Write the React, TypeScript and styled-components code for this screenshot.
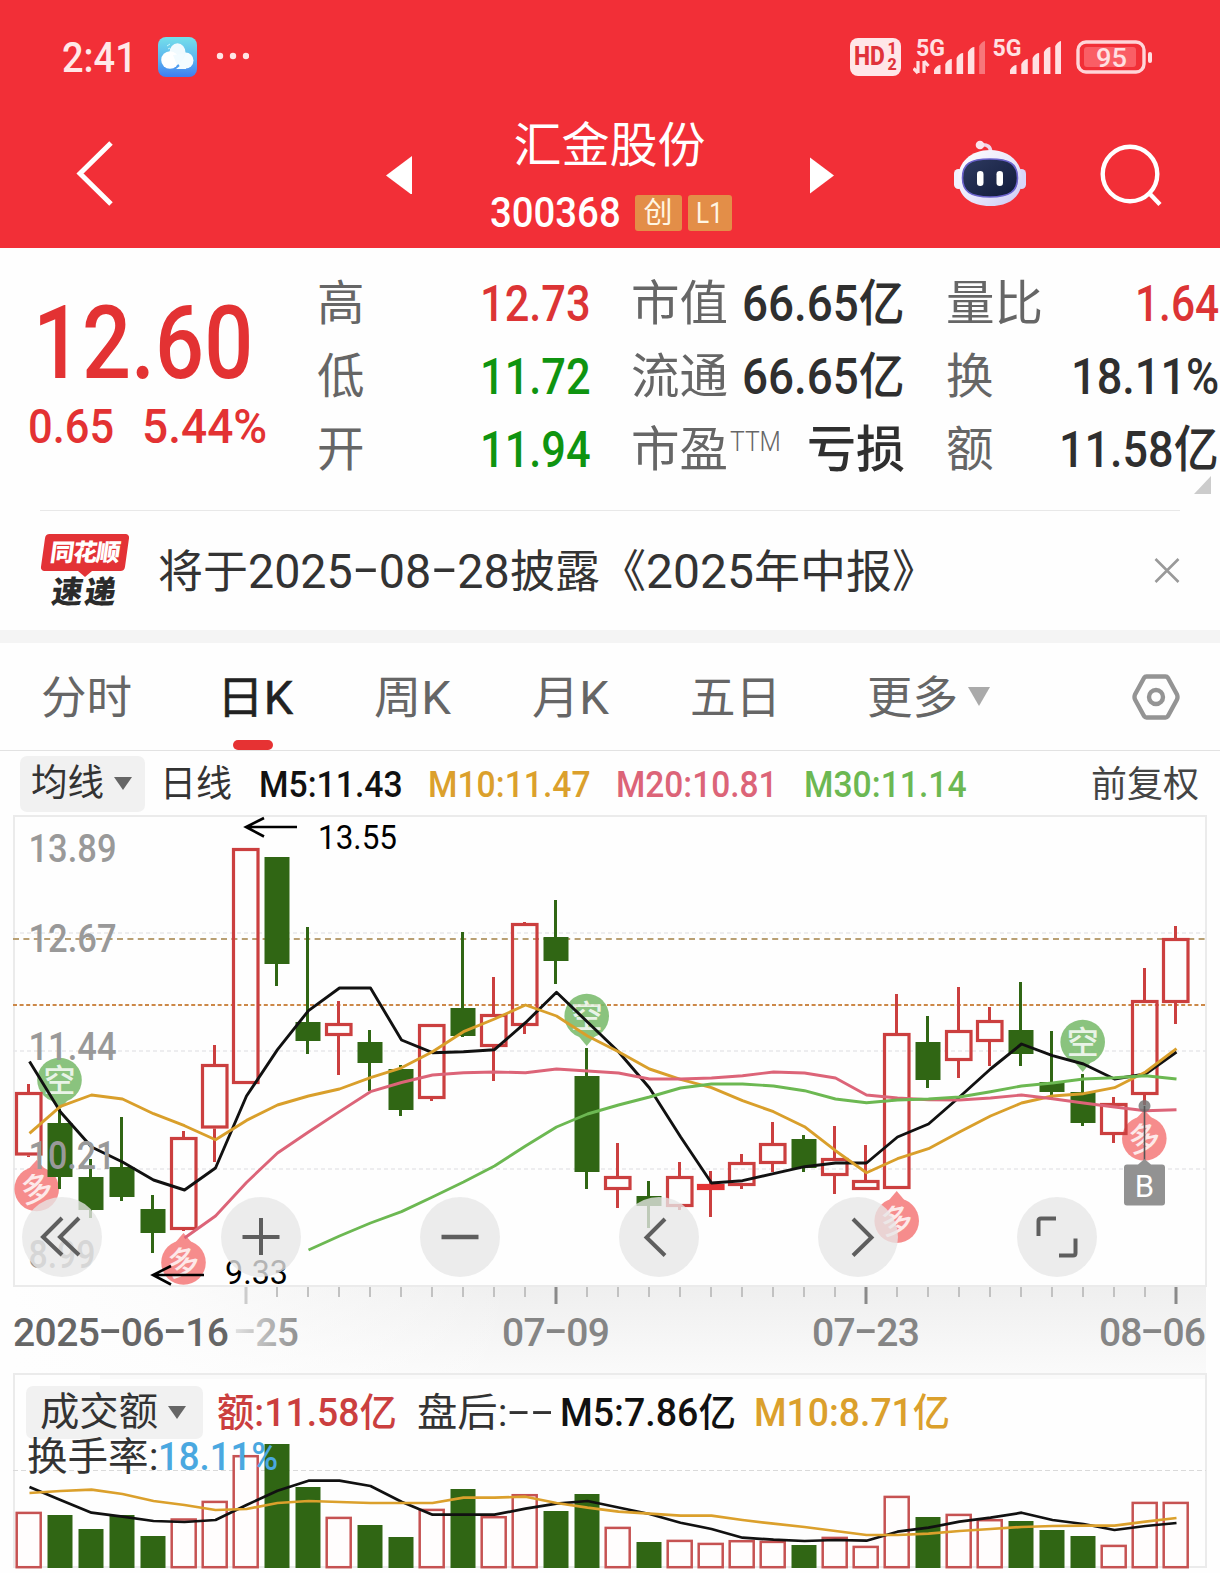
import React, { useLayoutEffect, useRef, useState } from "react";
import styled, { createGlobalStyle } from "styled-components";

const FONT = `Roboto, "Noto Sans CJK SC", sans-serif`;
const RED = "#cb3f3f";
const GREEN = "#306614";

const Global = createGlobalStyle`
  *, *::before, *::after { box-sizing: border-box; }
  html, body { margin: 0; padding: 0; background: #fefefe; }
  body { font-family: ${FONT}; color: #333; width: 1220px; overflow-x: hidden; }
  svg { display: block; flex: none; }
`;

/* ---------- text fitted to a fixed advance width ---------- */

const FitBox = styled.span<{ $w: number }>`
  display: inline-block;
  flex: none;
  width: ${(p) => p.$w}px;
  white-space: nowrap;
  line-height: 1;
`;
const FitInner = styled.span`
  display: inline-block;
  transform-origin: 0 50%;
  line-height: 1;
`;

function Fit({ w, children }: { w: number; children: React.ReactNode }) {
  const ref = useRef<HTMLSpanElement>(null);
  const [scale, setScale] = useState(1);
  useLayoutEffect(() => {
    if (ref.current) setScale(w / ref.current.offsetWidth);
  }, [w]);
  return (
    <FitBox $w={w}>
      <FitInner ref={ref} style={{ transform: `scaleX(${scale})` }}>
        {children}
      </FitInner>
    </FitBox>
  );
}

const Dash = styled.span`
  display: inline-block;
  width: 0.56em;
  text-align: center;
  transform: translateY(-0.06em) scaleX(1.8);
`;

/* ---------- header ---------- */

const Page = styled.main`
  width: 1220px;
  height: 1573px;
  overflow: hidden;
  display: flex;
  flex-direction: column;
  background: #fefefe;
`;
const Header = styled.header`
  height: 248px;
  background: #f22f37;
  color: #fff;
  flex: none;
`;
const StatusBar = styled.div`
  height: 114px;
  padding: 0 67px 0 62px;
  display: flex;
  align-items: center;
  color: #ffe8e8;
`;
const Clock = styled.span`
  font-size: 43px;
  font-weight: 500;
  line-height: 1;
  margin-right: 21px;
`;
const StatusRight = styled.div`
  margin-left: auto;
  display: flex;
  align-items: center;
`;
const HdBadge = styled.div`
  width: 51px;
  height: 38px;
  border-radius: 8px;
  background: #ffe6e8;
  color: #e0323a;
  display: flex;
  align-items: center;
  justify-content: center;
  font-weight: 800;
  font-size: 25px;
  margin: 0 12px 1px 0;
`;
const HdDigits = styled.span`
  display: flex;
  flex-direction: column;
  font-size: 16px;
  line-height: 16px;
  margin-left: 2px;
`;
const SignalSvg = styled.svg<{ $gap: number }>`
  margin-right: ${(p) => p.$gap}px;
`;
const TitleBar = styled.div`
  height: 120px;
  display: grid;
  grid-template-columns: 74px 312px 28px 390px 30px 116px 84px 62px 70px 1fr;
  align-items: center;
`;
const TitleBlock = styled.div`
  display: flex;
  flex-direction: column;
  align-items: center;
  padding-right: 0;
  padding-left: 3px;
`;
const StockName = styled.h1`
  margin: 0 0 19px;
  padding-right: 2px;
  font-size: 48px;
  font-weight: 400;
  line-height: 58px;
`;
const CodeRow = styled.div`
  display: flex;
  align-items: center;
  height: 38px;
  gap: 6px;
  font-size: 43px;
  font-weight: 500;
`;
const Badge = styled.span<{ $w: number }>`
  width: ${(p) => p.$w}px;
  height: 36px;
  border-radius: 3px;
  background: #e38e48;
  color: #fff6e4;
  font-size: 29px;
  font-weight: 400;
  line-height: 36px;
  text-align: center;
`;
const CodeNum = styled.span`
  margin-right: 8px;
  line-height: 38px;
  display: flex;
  align-items: center;
`;

/* ---------- quote ---------- */

const Quote = styled.section`
  height: 262px;
  flex: none;
  display: grid;
  grid-template-columns: 317px 274px 40px 274px 41px 273px;
  padding-top: 19px;
  position: relative;
`;
const PriceCol = styled.div`
  color: #e33233;
  display: flex;
  flex-direction: column;
  padding: 18px 0 0 28px;
`;
const Price = styled.div`
  font-size: 102px;
  font-weight: 500;
  line-height: 118px;
  height: 116px;
  padding-left: 5px;
  display: flex;
  align-items: center;
`;
const ChangeRow = styled.div`
  display: flex;
  align-items: center;
  gap: 28px;
  font-size: 49px;
  font-weight: 500;
  height: 50px;
`;
const Col = styled.div`
  display: flex;
  flex-direction: column;
`;
const Cell = styled.div`
  height: 73px;
  display: flex;
  align-items: center;
  justify-content: space-between;
`;
const CellLabel = styled.span`
  font-size: 47.5px;
  line-height: 1;
  color: #666;
  display: flex;
  font-weight: 400;
  padding-top: 2px;
`;
const Sup = styled.span`
  font-size: 27px;
  line-height: 1;
  font-weight: 300;
  margin: 2px 0 0 2px;
`;
const CellValue = styled.span<{ $c: string }>`
  font-size: 50px;
  font-weight: 500;
  line-height: 1;
  color: ${(p) => p.$c};
`;
const Corner = styled.i`
  position: absolute;
  right: 9px;
  bottom: 16px;
  border-left: 17px solid transparent;
  border-bottom: 18px solid #ccc;
`;

/* ---------- notice ---------- */

const Notice = styled.section`
  height: 120px;
  flex: none;
  margin: 0 40px;
  border-top: 1px solid #e8e8e8;
  display: flex;
  align-items: center;
  font-size: 45px;
  color: #333;
`;
const LogoBox = styled.div`
  width: 90px;
  height: 74px;
  display: flex;
  flex-direction: column;
  align-items: center;
  margin-right: 28px;
`;
const LogoTop = styled.div`
  width: 84px;
  height: 37px;
  background: #e33236;
  border-radius: 4px;
  transform: skewX(-8deg);
  color: #fff;
  font-weight: 900;
  font-size: 24px;
  line-height: 39px;
  text-align: center;
  letter-spacing: -1px;
`;
const LogoTip = styled.i`
  border-left: 7px solid transparent;
  border-right: 7px solid transparent;
  border-top: 6px solid #e33236;
`;
const LogoBottom = styled.div`
  color: #2b2b2b;
  font-weight: 900;
  font-size: 31px;
  line-height: 32px;
  transform: skewX(-8deg);
  letter-spacing: 2px;
`;
const NoticeText = styled.p`
  margin: 0;
  padding-top: 3px;
  flex: 1;
  display: flex;
  align-items: center;
`;
const Digits = styled.span`
  font-size: 48px;
  display: flex;
`;
const CloseSvg = styled.svg`
  margin: 0 0 1px;
`;

const Band = styled.div`
  height: 13px;
  flex: none;
  background: #f4f4f4;
`;

/* ---------- tabs ---------- */

const Tabs = styled.nav`
  height: 108px;
  flex: none;
  border-bottom: 1px solid #e2e2e2;
  display: grid;
  grid-template-columns: 41px 176px 157px 158px 158px 177px 265px 1fr;
  font-size: 45.5px;
`;
const Tab = styled.div<{ $on?: boolean }>`
  position: relative;
  height: 107px;
  padding-top: 4px;
  display: flex;
  align-items: center;
  justify-self: start;
  color: ${(p) => (p.$on ? "#222" : "#666")};
  -webkit-text-stroke: ${(p) => (p.$on ? "0.5px #222" : "0")};
  line-height: 1;
  & > svg, & > i { margin-top: -4px; }
  &::after {
    content: "";
    display: ${(p) => (p.$on ? "block" : "none")};
    position: absolute;
    left: 50%;
    margin-left: -22px;
    bottom: 0;
    width: 40px;
    height: 10px;
    border-radius: 5px;
    background: #e63233;
  }
`;
const Caret = styled.i<{ $s: number; $h: number; $c: string }>`
  border-left: ${(p) => p.$s}px solid transparent;
  border-right: ${(p) => p.$s}px solid transparent;
  border-top: ${(p) => p.$h}px solid ${(p) => p.$c};
  margin-left: 10px;
`;

/* ---------- indicator rows ---------- */

const MaRow = styled.div`
  height: 64px;
  flex: none;
  padding: 1px 21px 0 20px;
  display: flex;
  align-items: center;
  font-size: 37px;
`;
const Select = styled.div<{ $w: number; $h: number; $pad: number }>`
  width: ${(p) => p.$w}px;
  height: ${(p) => p.$h}px;
  padding-left: ${(p) => p.$pad}px;
  border-radius: 7px;
  background: #f1f1f1;
  display: flex;
  align-items: center;
  flex: none;
`;
const Item = styled.span<{ $c: string; $ml: number; $bold?: boolean }>`
  color: ${(p) => p.$c};
  margin-left: ${(p) => p.$ml}px;
  font-weight: ${(p) => (p.$bold ? 500 : 400)};
  line-height: 1;
  display: flex;
  padding-top: 1px;
`;
const Push = styled.span`
  margin: 2px 0 0 auto;
  color: #444;
  font-size: 36px;
  line-height: 1;
`;

const ChartArea = styled.section`
  position: relative;
  height: 558px;
  flex: none;
`;
const Controls = styled.div`
  position: absolute;
  top: 382px;
  left: 22px;
  display: flex;
  gap: 119px;
`;
const RoundBtn = styled.button`
  width: 80px;
  height: 80px;
  padding: 0;
  border: 0;
  border-radius: 50%;
  background: rgba(231, 231, 231, 0.78);
  display: grid;
  place-items: center;
`;
const VolumeArea = styled.section`
  position: relative;
  height: 200px;
  flex: none;
`;
const VolSvg = styled.svg`
  position: absolute;
  inset: 0;
`;
const VolRow = styled.div`
  position: relative;
  padding: 13px 0 0 26px;
  display: flex;
  align-items: center;
  font-size: 39px;
`;
const TurnRow = styled.div`
  position: relative;
  margin-top: -2px;
  padding-left: 27px;
  display: flex;
  font-size: 39px;
  line-height: 1;
`;

/* ---------- data ---------- */

type Candle = [string, number, number, number, number];
// kind, wick top, body top, body bottom, wick bottom
const candles: Candle[] = [
  ["r", 1084, 1092, 1155.5, 1157], ["g", 1109, 1123, 1177, 1189], ["g", 1159, 1177, 1210, 1218],
  ["g", 1117, 1167, 1197, 1201], ["g", 1195, 1209, 1233, 1253], ["r", 1131, 1137, 1230, 1231],
  ["r", 1045, 1064, 1128.5, 1162], ["r", 848, 848, 1084, 1084], ["g", 857, 857, 964, 986],
  ["g", 927, 1022, 1041, 1054], ["r", 1001, 1023, 1036, 1075], ["g", 1030, 1042, 1063, 1091],
  ["g", 1065, 1069, 1110, 1116], ["r", 1024, 1024, 1099, 1101], ["g", 932, 1008, 1036, 1037],
  ["r", 977, 1014, 1047, 1081], ["r", 922, 923, 1026, 1034], ["g", 900, 937, 961, 984],
  ["g", 1048, 1076, 1172, 1189], ["r", 1143, 1176, 1190, 1208], ["g", 1181, 1196, 1206, 1228],
  ["r", 1162, 1176, 1207, 1210], ["f", 1171, 1184, 1190, 1217], ["r", 1154, 1162, 1186, 1189],
  ["r", 1122, 1143, 1164, 1172], ["g", 1135, 1139, 1168, 1172], ["r", 1126, 1158, 1176, 1194],
  ["r", 1145, 1180, 1190, 1190], ["r", 994, 1033, 1189, 1189], ["g", 1016, 1042, 1080, 1088],
  ["r", 987, 1030, 1061, 1078], ["r", 1007, 1020, 1042, 1066], ["g", 982, 1030, 1054, 1066],
  ["g", 1031, 1082, 1092, 1098], ["g", 1074, 1092, 1123, 1126], ["r", 1097, 1103, 1135, 1143],
  ["r", 968, 1000, 1095, 1105], ["r", 926, 938, 1003, 1024],
];
const ma5 = [1061.5, 1112, 1147, 1162, 1180, 1190, 1168, 1096, 1049.6, 1010.6, 988, 988, 1040, 1052.7, 1051.7, 1049.7, 1022.7, 992.3, 1022, 1051.7, 1088, 1136.7, 1183, 1180.7, 1173.7, 1166.7, 1163, 1163, 1137, 1124, 1097, 1069, 1044, 1055.7, 1064, 1079, 1074, 1052];
const ma10 = [1133.4, 1106.4, 1095, 1099, 1113.7, 1125.7, 1139.7, 1120.4, 1105, 1096, 1089, 1077.6, 1067.8, 1051.7, 1031.7, 1019, 1005, 1016, 1036, 1051.7, 1069, 1079.3, 1087.7, 1100.7, 1111.7, 1126.7, 1150.7, 1172.7, 1158.7, 1148.7, 1132, 1116, 1103, 1096, 1093.7, 1087.7, 1072, 1048.7];
const ma20 = [1238, 1216, 1182.5, 1153, 1132, 1111.6, 1091.7, 1082.5, 1075, 1072.7, 1072, 1072.7, 1069, 1071, 1073, 1079, 1079, 1078, 1075.7, 1072, 1073, 1078, 1095, 1098, 1099.7, 1100, 1098, 1095, 1098.7, 1103, 1107, 1110.7, 1109.7];
const ma30 = [1250, 1236, 1223, 1211.6, 1197, 1182, 1166, 1146, 1127, 1114, 1105, 1097, 1088, 1084, 1084, 1086, 1090.7, 1099, 1102.7, 1100, 1099, 1097, 1091.7, 1086, 1083, 1079, 1077.7, 1075.7, 1079];
const volTops = [1511.7, 1515, 1529, 1515, 1536, 1518.3, 1500.7, 1455, 1444, 1487, 1516.7, 1525, 1537, 1508.7, 1489, 1516, 1494, 1511, 1494, 1526.7, 1542, 1539.7, 1542.7, 1540, 1540.7, 1545, 1536.7, 1545.7, 1495.7, 1517, 1513.7, 1519, 1521, 1530, 1536, 1544.7, 1501.7, 1501.7];
const vol5 = [1487, 1500, 1512.7, 1516.7, 1521, 1522, 1520, 1505, 1490.7, 1480.7, 1480.7, 1486, 1501.7, 1514.7, 1514.7, 1514.7, 1508.7, 1503.7, 1501, 1507.5, 1514, 1522.7, 1529, 1537.7, 1539.7, 1541, 1540, 1540.7, 1531.7, 1527.7, 1521.7, 1517.7, 1512.7, 1520, 1524, 1530, 1526, 1523];
const vol10 = [1493, 1491, 1489.7, 1494, 1501, 1505, 1510, 1509, 1503, 1501, 1502, 1503, 1503, 1503, 1497.7, 1497.7, 1496.7, 1503, 1507.7, 1511.7, 1513.7, 1515.7, 1515.7, 1520, 1523.7, 1527, 1531, 1535, 1535, 1533.7, 1531, 1529, 1527, 1526, 1525.7, 1525.7, 1521.7, 1518];

const cx = (i: number) => 28.5 + 31 * i;
const line = (ys: number[], from = 0) =>
  ys.map((y, k) => `${cx(k + from) + 1},${y}`).join(" ");

function CandleMark({ c, i }: { c: Candle; i: number }) {
  const [kind, wt, bt, bb, wb] = c;
  const x = cx(i);
  if (kind === "g")
    return (
      <g fill={GREEN}>
        <rect x={x - 1.5} y={wt} width={3} height={wb - wt} />
        <rect x={x + 0.5 - 12.5} y={bt} width={25} height={bb - bt} />
      </g>
    );
  return (
    <g>
      <rect x={x - 1.5} y={wt} width={3} height={Math.max(0, bt - wt)} fill={RED} />
      <rect x={x - 1.5} y={bb} width={3} height={Math.max(0, wb - bb)} fill={RED} />
      <rect x={x - 12} y={bt + 1.5} width={24.5} height={bb - bt - 3}
        fill={kind === "f" ? "#e33233" : "none"} stroke={kind === "f" ? "#e33233" : RED} strokeWidth={3.2} />
    </g>
  );
}

function Pin({ x, y, t, tipY }: { x: number; y: number; t: "空" | "多"; tipY: number }) {
  const up = t === "多";
  const edge = up ? y - 18 : y + 18;
  const fill = up ? "#f57c7c" : "#79bb6c";
  return (
    <g opacity={0.87}>
      <path d={`M${x - 10} ${edge}L${x} ${tipY}L${x + 10} ${edge}Z`} fill={fill} />
      <circle cx={x} cy={y} r={22.3} fill={fill} />
      <text x={x} y={y + 11.5} fontSize={32} fontWeight={500} textAnchor="middle" fill="#fff" opacity={0.82}
        transform={up ? `rotate(-12 ${x} ${y})` : undefined}>{t}</text>
    </g>
  );
}

/* axis dates: the hyphens are drawn long and at mid-digit height */
function AxisDate({ x, w, parts, fill }: { x: number; w: number; parts: string[]; fill?: string }) {
  return (
    <text x={x} y={1346} fill={fill} textLength={w} lengthAdjust="spacing">
      {parts.map((p, k) => (
        <React.Fragment key={k}>
          {k > 0 && <tspan fontSize={76} fontWeight={300} dy={9}>-</tspan>}
          {p && <tspan dy={k > 0 ? -9 : 0}>{p}</tspan>}
        </React.Fragment>
      ))}
    </text>
  );
}

function PriceChart() {
  const labels: [string, number, number][] = [
    ["13.89", 862, 88], ["12.67", 952, 88], ["11.44", 1060, 88], ["10.21", 1169, 87], ["8.99", 1268, 67],
  ];
  return (
    <svg width={1220} height={558} viewBox="0 815 1220 558" fontFamily={FONT}>
      <defs>
        <linearGradient id="axisV" x1="0" y1="0" x2="0" y2="1">
          <stop offset="0" stopColor="#efefef" />
          <stop offset="1" stopColor="#fafafa" />
        </linearGradient>
        <linearGradient id="axisH" x1="0" y1="0" x2="1" y2="0">
          <stop offset="0" stopColor="#fefefe" />
          <stop offset="0.12" stopColor="#fefefe" stopOpacity="0.85" />
          <stop offset="0.42" stopColor="#fefefe" stopOpacity="0" />
        </linearGradient>
        <linearGradient id="fade25" x1="0" y1="0" x2="1" y2="0">
          <stop offset="0" stopColor="#e2e2e2" />
          <stop offset="1" stopColor="#8f8f8f" />
        </linearGradient>
      </defs>
      <rect x={13} y={1287} width={1193} height={86} fill="url(#axisV)" />
      <rect x={13} y={1287} width={1193} height={86} fill="url(#axisH)" />
      <rect x={14} y={816} width={1192} height={470} fill="none" stroke="#ebebeb" strokeWidth={2} />
      {[933, 1051, 1169].map((y) => (
        <line key={y} x1={13} x2={1206} y1={y} y2={y} stroke="#e8e8ea" strokeWidth={1.6} strokeDasharray="4 3" />
      ))}
      <line x1={13} x2={1206} y1={939} y2={939} stroke="#b9a074" strokeWidth={2} strokeDasharray="6 4.4" />
      <line x1={13} x2={1206} y1={1005} y2={1005} stroke="#cc8848" strokeWidth={2} strokeDasharray="4 2.6" />

      <Pin x={59.5} y={1080} t="空" tipY={1110} />
      <Pin x={586.7} y={1016} t="空" tipY={1046} />
      <Pin x={1082.7} y={1042} t="空" tipY={1072} />
      <Pin x={36.7} y={1189} t="多" tipY={1160} />
      <Pin x={183.5} y={1262.5} t="多" tipY={1233} />
      <Pin x={896.7} y={1220.7} t="多" tipY={1191} />
      <Pin x={1144.3} y={1138.5} t="多" tipY={1110} />

      {candles.map((c, i) => <CandleMark key={i} c={c} i={i} />)}

      <g fill="none" strokeWidth={2.9} strokeLinejoin="round">
        <polyline points={line(ma5)} stroke="#111" />
        <polyline points={line(ma10)} stroke="#d99f2b" />
        <polyline points={line(ma20, 5)} stroke="#dc6478" />
        <polyline points={line(ma30, 9)} stroke="#6cb852" />
      </g>

      <g fill="#999" fontSize={39.5} fontWeight={500}>
        {labels.map(([t, y, w]) => (
          <text key={t} x={28.5} y={y} textLength={w} lengthAdjust="spacingAndGlyphs">{t}</text>
        ))}
      </g>

      <g stroke="#000" strokeWidth={2.6} fill="none">
        <path d="M297 827H246M264 818L246 827L264 836.5" />
        <path d="M204 1275H153M171 1266L153 1275L171 1284.5" />
      </g>
      <g fill="#000" fontSize={34}>
        <text x={318} y={849} textLength={79} lengthAdjust="spacingAndGlyphs">13.55</text>
        <text x={225} y={1284} textLength={63} lengthAdjust="spacingAndGlyphs">9.33</text>
      </g>

      <circle cx={1144.5} cy={1106} r={6} fill="#777" opacity={0.85} />
      <path d="M1144.5 1106V1162" stroke="#555" strokeWidth={1.6} />
      <path d="M1127 1164.5H1138L1144.5 1159L1151 1164.5H1162a3 3 0 0 1 3 3V1202.500a3 3 0 0 1 -3 3H1127a3 3 0 0 1 -3 -3V1167.500a3 3 0 0 1 3 -3Z" fill="#929292" />
      <text x={1144.5} y={1197} fontSize={31} textAnchor="middle" fill="#fff">B</text>

      {candles.map((_, i) => {
        if (i < 7) return null;
        const big = i === 7 || i === 17 || i === 27 || i === 37;
        return (
          <rect key={i} x={cx(i) + 0.5 - (big ? 1.5 : 1)} y={1287} width={big ? 3 : 2} height={big ? 17 : 10}
            fill={big ? (i === 7 ? "#ccc" : "#8a8a8a") : "#c2c2c2"} />
        );
      })}
      <g fontSize={39} fontWeight={500} fill="#858585">
        <AxisDate x={13} w={216} fill="#666" parts={["2025", "06", "16"]} />
        <AxisDate x={234} w={65} fill="url(#fade25)" parts={["", "25"]} />
        <AxisDate x={502} w={108} parts={["07", "09"]} />
        <AxisDate x={812} w={108} parts={["07", "23"]} />
        <AxisDate x={1099} w={107} parts={["08", "06"]} />
      </g>
    </svg>
  );
}

function VolumeChart() {
  return (
    <VolSvg width={1220} height={200} viewBox="0 1373 1220 200">
      <rect x={100} y={1373} width={1106} height={6} fill="#fafafa" />
      <rect x={14} y={1374} width={1192} height={193} fill="none" stroke="#ebebeb" strokeWidth={2} />
      <line x1={13} x2={1206} y1={1470.500} y2={1470.500} stroke="#dadada" strokeWidth={1} strokeDasharray="5 3" />
      {volTops.map((y, i) =>
        candles[i][0] === "g" ? (
          <rect key={i} x={cx(i) - 12} y={y} width={25} height={1568 - y} fill={GREEN} />
        ) : (
          <rect key={i} x={cx(i) - 11.8} y={y + 1.2} width={24} height={1567 - y - 1} fill="#fffdfd" stroke="#c65252" strokeWidth={2.5} />
        )
      )}
      <g fill="none" strokeWidth={2.7} strokeLinejoin="round">
        <polyline points={line(vol5)} stroke="#111" />
        <polyline points={line(vol10)} stroke="#dba02c" />
      </g>
    </VolSvg>
  );
}

/* ---------- drawings ---------- */

const CloudIcon = () => (
  <svg width={39} height={40} viewBox="0 0 39 40">
    <defs>
      <linearGradient id="sky" x1="0" y1="0" x2="0" y2="1">
        <stop offset="0" stopColor="#74e0ea" />
        <stop offset="0.55" stopColor="#5cb4ef" />
        <stop offset="1" stopColor="#3f7df0" />
      </linearGradient>
    </defs>
    <rect width={39} height={40} rx={8} fill="url(#sky)" />
    <circle cx={27.500} cy={23.500} r={8} fill="#f4fcff" />
    <path d="M18 32H28V24Z" fill="#f4fcff" />
    <ellipse cx={19.500} cy={15.500} rx={8} ry={9.300} fill="#f0fafe" />
    <circle cx={12} cy={23} r={8.800} fill="#fff" />
    <path d="M15 18L26 17L24 24L19 28Z" fill="#f2fbff" />
    <path d="M9 9l3-2M10 12l2-1" stroke="#c7f6f8" strokeWidth={1} />
  </svg>
);

const Dots = () => (
  <svg width={52} height={10} viewBox="0 0 52 10" fill="#ffe4e4">
    <circle cx={23} cy={4} r={3.200} /><circle cx={36} cy={4} r={3.200} /><circle cx={49} cy={4} r={3.200} />
  </svg>
);

function Signal({ weak, gap }: { weak?: boolean; gap: number }) {
  return (
    <SignalSvg $gap={gap} width={weak ? 72 : 69} height={50} viewBox={weak ? "0 -6 72 50" : "3 -6 69 50"} fill="#ffe0e2" fontFamily={FONT}>
      <text x={weak ? 3 : 3.5} y={17.500} fontSize={23} fontWeight={700} textLength={29} lengthAdjust="spacingAndGlyphs">5G</text>
      {[0, 1, 2, 3, 4].map((k) => (
        <path key={k} d={`M${21 + k * 11.300} ${32 - k * 6}Q${24 + k * 11.300} ${27 - k * 6} ${27.500 + k * 11.300} ${27 - k * 6}V36H${21 + k * 11.300}Z`}
          opacity={weak && k === 4 ? 0.4 : 1} />
      ))}
      {weak && <path d="M5 23V35M5 35L0.500 30.500M11 35V23M11 23L15.500 28" stroke="#ffe0e2" strokeWidth={3.200} fill="none" />}
    </SignalSvg>
  );
}

const Battery = () => (
  <svg width={77} height={34} viewBox="0 0 77 34" fontFamily={FONT}>
    <rect x={2} y={2} width={66} height={30} rx={8} fill="none" stroke="#ffd5d8" strokeWidth={3.400} />
    <rect x={8} y={7} width={52} height={20} rx={3} fill="#fb6a71" opacity={0.8} />
    <rect x={72} y={12} width={4} height={11} rx={2} fill="#ffe0e2" />
    <text x={20} y={26.500} fontSize={26} fontWeight={500} fill="#ffe0e2" textLength={31} lengthAdjust="spacingAndGlyphs">95</text>
  </svg>
);

const Robot = () => (
  <svg width={76} height={70} viewBox="0 0 76 70">
    <defs>
      <linearGradient id="shell" x1="0" y1="0" x2="1" y2="1">
        <stop offset="0" stopColor="#fff" />
        <stop offset="0.55" stopColor="#e9e7fb" />
        <stop offset="1" stopColor="#c9c8f4" />
      </linearGradient>
      <linearGradient id="visor" x1="0" y1="0" x2="1" y2="1">
        <stop offset="0" stopColor="#2e3a60" />
        <stop offset="1" stopColor="#101a3a" />
      </linearGradient>
    </defs>
    <path d="M28 6Q39 4 39 15" fill="none" stroke="#f0d6ea" strokeWidth={3.600} />
    <circle cx={28} cy={6} r={4.300} fill="#fbe4ee" />
    <rect x={2} y={30} width={9} height={20} rx={4.500} fill="#f2f1ff" />
    <rect x={65} y={30} width={9} height={20} rx={4.500} fill="#d9d6fa" />
    <path d="M38 11C57 11 70 23 70 40C70 58 57 67 38 67C19 67 6 58 6 40C6 23 19 11 38 11Z" fill="url(#shell)" />
    <path d="M38 20C58 20 65.500 25 65.500 39C65.500 52 58 58 38 58C18 58 10.500 52 10.500 39C10.500 25 18 20 38 20Z" fill="url(#visor)" stroke="#6a62cc" strokeWidth={1.600} />
    <rect x={25} y={32} width={6.500} height={15} rx={3.200} fill="#fff" />
    <rect x={44.500} y={32} width={6.500} height={15} rx={3.200} fill="#fff" />
  </svg>
);

const icon = { fill: "none", stroke: "#5e5e5e", strokeWidth: 4 } as const;
const controlIcons = [
  <path key="a" d="M40 21L21 40L40 58M57 21L38 40L57 58" />,
  <path key="b" d="M40 21V58M21.500 40H58.500" />,
  <path key="c" d="M21.500 40H58.500" strokeWidth={4.600} />,
  <path key="d" d="M46 22L27.500 40.500L46 58.500" />,
  <path key="e" d="M35 22L53.500 40.500L35 58.500" />,
  <path key="f" d="M21.500 39V24Q21.500 21.500 24 21.500H39M42 58.500H56Q58.500 58.500 58.500 56V41.500" />,
];

/* ---------- page ---------- */

const INK = "#2f2f2f";
const UP = "#dc3435";
const DOWN = "#0f9410";

export default function App() {
  return (
    <Page>
      <Global />
      <Header>
        <StatusBar>
          <Clock><Fit w={75}>2:41</Fit></Clock>
          <CloudIcon />
          <Dots />
          <StatusRight>
            <HdBadge>
              <Fit w={31}>HD</Fit>
              <HdDigits><span>1</span><span>2</span></HdDigits>
            </HdBadge>
            <Signal weak gap={7} />
            <Signal gap={15} />
            <Battery />
          </StatusRight>
        </StatusBar>
        <TitleBar>
          <span />
          <svg width={44} height={70} viewBox="0 0 44 70" fill="none" stroke="#fff" strokeWidth={5}>
            <path d="M37 4L6 34.500L37 65" />
          </svg>
          <svg width={28} height={40} viewBox="0 -2 28 40"><path d="M0 19.500L26 0V39Z" fill="#fff" /></svg>
          <TitleBlock>
            <StockName>汇金股份</StockName>
            <CodeRow>
              <CodeNum><Fit w={131}>300368</Fit></CodeNum>
              <Badge $w={47}>创</Badge>
              <Badge $w={44}><Fit w={27}>L1</Fit></Badge>
            </CodeRow>
          </TitleBlock>
          <svg width={30} height={42} viewBox="0 -4 30 42"><path d="M6 0.500L30 18.500L6 36.500Z" fill="#fff" /></svg>
          <span />
          <svg width={78} height={70} viewBox="-2 0 78 70"><Robot /></svg>
          <span />
          <svg width={68} height={68} viewBox="0 -2 68 68" fill="none" stroke="#fff" strokeWidth={4.400}>
            <circle cx={34} cy={32} r={27.300} />
            <path d="M53.500 51.500L64 62.500" />
          </svg>
        </TitleBar>
      </Header>

      <Quote>
        <PriceCol>
          <Price><Fit w={220}>12.60</Fit></Price>
          <ChangeRow>
            <Fit w={86}>0.65</Fit>
            <Fit w={125}>5.44%</Fit>
          </ChangeRow>
        </PriceCol>
        <Col>
          <Cell><CellLabel>高</CellLabel><CellValue $c={UP}><Fit w={111}>12.73</Fit></CellValue></Cell>
          <Cell><CellLabel>低</CellLabel><CellValue $c={DOWN}><Fit w={111}>11.72</Fit></CellValue></Cell>
          <Cell><CellLabel>开</CellLabel><CellValue $c={DOWN}><Fit w={111}>11.94</Fit></CellValue></Cell>
        </Col>
        <span />
        <Col>
          <Cell><CellLabel><Fit w={97}>市值</Fit></CellLabel><CellValue $c={INK}><Fit w={163}>66.65亿</Fit></CellValue></Cell>
          <Cell><CellLabel><Fit w={97}>流通</Fit></CellLabel><CellValue $c={INK}><Fit w={163}>66.65亿</Fit></CellValue></Cell>
          <Cell><CellLabel><Fit w={97}>市盈</Fit><Sup><Fit w={51}>TTM</Fit></Sup></CellLabel><CellValue $c={INK}><Fit w={98}>亏损</Fit></CellValue></Cell>
        </Col>
        <span />
        <Col>
          <Cell><CellLabel><Fit w={97}>量比</Fit></CellLabel><CellValue $c={UP}><Fit w={84}>1.64</Fit></CellValue></Cell>
          <Cell><CellLabel>换</CellLabel><CellValue $c={INK}><Fit w={148}>18.11%</Fit></CellValue></Cell>
          <Cell><CellLabel>额</CellLabel><CellValue $c={INK}><Fit w={160}>11.58亿</Fit></CellValue></Cell>
        </Col>
        <Corner />
      </Quote>

      <Notice>
        <LogoBox>
          <LogoTop>同花顺</LogoTop>
          <LogoTip />
          <LogoBottom><Fit w={66}>速递</Fit></LogoBottom>
        </LogoBox>
        <NoticeText>
          <Fit w={90}>将于</Fit>
          <Digits><Fit w={262}>2025<Dash>-</Dash>08<Dash>-</Dash>28</Fit></Digits>
          <Fit w={90}>披露</Fit>
          <Fit w={46}>《</Fit>
          <Digits><Fit w={108}>2025</Fit></Digits>
          <Fit w={138}>年中报</Fit>
          <Fit w={45}>》</Fit>
        </NoticeText>
        <CloseSvg width={26} height={26} viewBox="0 0 26 26" stroke="#999" strokeWidth={2.600}>
          <path d="M1.500 2L24.500 25M24.500 2L1.500 25" />
        </CloseSvg>
      </Notice>

      <Band />

      <Tabs>
        <span />
        <Tab>分时</Tab>
        <Tab $on><Fit w={76}>日K</Fit></Tab>
        <Tab><Fit w={77}>周K</Fit></Tab>
        <Tab><Fit w={77}>月K</Fit></Tab>
        <Tab>五日</Tab>
        <Tab>更多<Caret $s={11.5} $h={19} $c="#aaa" /></Tab>
        <Tab>
          <svg width={48} height={48} viewBox="0 0 48 48" fill="none" stroke="#949494" strokeWidth={4.400} strokeLinejoin="round">
            <path d="M14.500 3.500H33.500Q35 3.500 36 5L45 21.500Q46 24 45 26.500L36 43Q35 44.500 33.500 44.500H14.500Q13 44.500 12 43L3 26.500Q2 24 3 21.500L12 5Q13 3.500 14.500 3.500Z" />
            <circle cx={24} cy={24} r={7} />
          </svg>
        </Tab>
      </Tabs>

      <MaRow>
        <Select $w={125} $h={56} $pad={11}><Fit w={73}>均线</Fit><Caret $s={9} $h={13} $c="#666" /></Select>
        <Item $c="#333" $ml={15}><Fit w={72}>日线</Fit></Item>
        <Item $c="#111" $ml={27} $bold><Fit w={144}>M5:11.43</Fit></Item>
        <Item $c="#dba02c" $ml={25} $bold><Fit w={163}>M10:11.47</Fit></Item>
        <Item $c="#dc6478" $ml={25} $bold><Fit w={162}>M20:10.81</Fit></Item>
        <Item $c="#6cb852" $ml={26} $bold><Fit w={163}>M30:11.14</Fit></Item>
        <Push>前复权</Push>
      </MaRow>

      <ChartArea>
        <PriceChart />
        <Controls>
          {controlIcons.map((p, k) => (
            <RoundBtn key={k}><svg width={80} height={80} viewBox="0 0 80 80" {...icon}>{p}</svg></RoundBtn>
          ))}
        </Controls>
      </ChartArea>

      <VolumeArea>
        <VolumeChart />
        <VolRow>
          <Select $w={177} $h={53} $pad={14}><Fit w={118}>成交额</Fit><Caret $s={9} $h={13} $c="#666" /></Select>
          <Item $c={RED} $ml={14} $bold><Fit w={180}>额:11.58亿</Fit></Item>
          <Item $c="#333" $ml={20}><Fit w={90}>盘后:</Fit><Fit w={47}><Dash>-</Dash><Dash>-</Dash></Fit></Item>
          <Item $c="#111" $ml={6} $bold><Fit w={176}>M5:7.86亿</Fit></Item>
          <Item $c="#dba02c" $ml={18} $bold><Fit w={196}>M10:8.71亿</Fit></Item>
        </VolRow>
        <TurnRow>
          <Item $c="#333" $ml={0}><Fit w={131}>换手率:</Fit></Item>
          <Item $c="#4aa8e0" $ml={0} $bold><Fit w={120}>18.11%</Fit></Item>
        </TurnRow>
      </VolumeArea>
    </Page>
  );
}
